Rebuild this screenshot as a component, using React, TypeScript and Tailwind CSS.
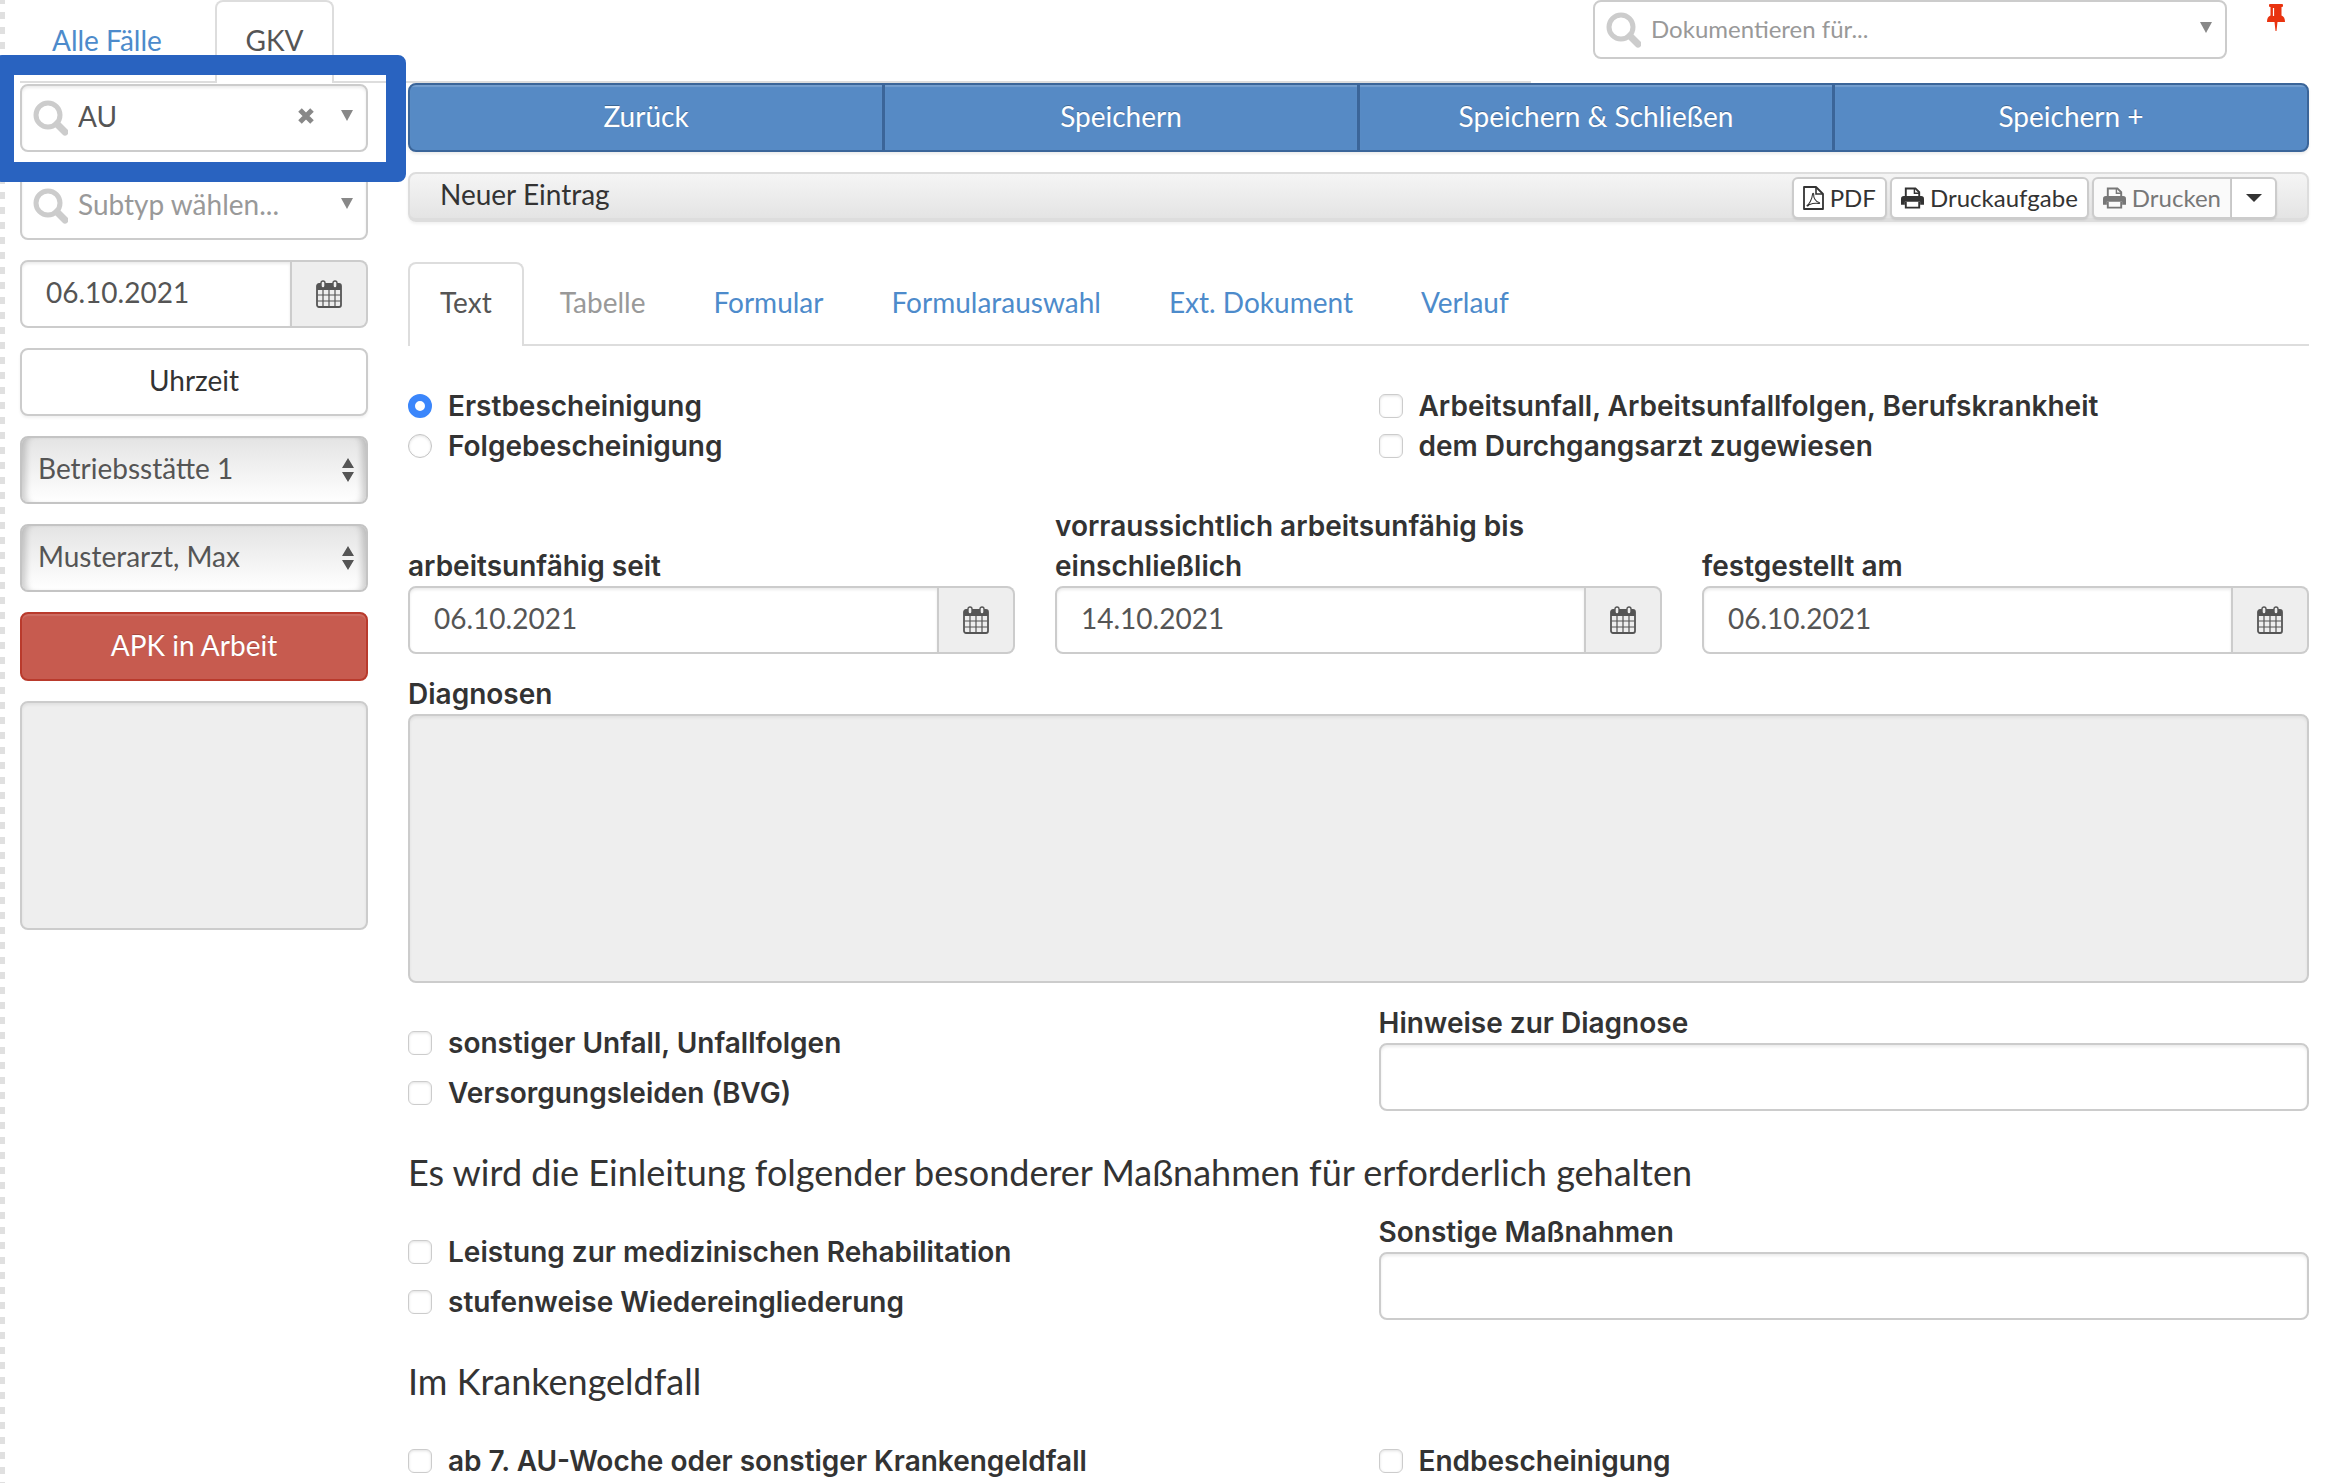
import React, { useState } from 'react';

const field =
  'h-[68px] w-full rounded-lg border-2 border-[#ccc] bg-white pb-1 text-[28px] shadow-[inset_0_2px_3px_rgba(0,0,0,0.08)] outline-none';

const labelText = "font-['Inter',sans-serif] text-[28px] leading-10 font-semibold text-[#333]";

const SearchIcon = () => (
  <svg className="pointer-events-none absolute top-1/2 left-3 h-9 w-9 -translate-y-1/2" viewBox="0 0 36 36" fill="none" stroke="#ccc">
    <circle cx="16" cy="15" r="12" strokeWidth="5" />
    <path d="M25 24l8 8" strokeWidth="7" strokeLinecap="round" />
  </svg>
);

const DownArrow = ({ className = '' }: { className?: string }) => (
  <svg className={className} viewBox="0 0 12 10" preserveAspectRatio="none" fill="currentColor">
    <path d="M0 0h12L6 10z" />
  </svg>
);

const UpDownArrow = () => (
  <svg className="pointer-events-none absolute top-1/2 right-3.5 h-[25px] w-3 -translate-y-1/2 text-[#555]" viewBox="0 0 12 24" fill="currentColor">
    <path d="M0 10h12L6 0zM0 14h12L6 24z" />
  </svg>
);

const CalendarIcon = () => (
  <svg className="h-7 w-[26px] text-[#555]" viewBox="0 0 26 28">
    <rect x="1" y="4" width="24" height="23" rx="2" fill="none" stroke="currentColor" strokeWidth="1.8" />
    <path d="M1 4h24v6H1z" fill="currentColor" />
    <path d="M1.5 15h23M1.5 21h23M7 10v16.5M13 10v16.5M19 10v16.5" stroke="currentColor" strokeWidth="1.2" />
    <rect x="5" y="1" width="4" height="7" rx="2" fill="#eee" stroke="currentColor" strokeWidth="1.4" />
    <rect x="17" y="1" width="4" height="7" rx="2" fill="#eee" stroke="currentColor" strokeWidth="1.4" />
  </svg>
);

const PrintIcon = () => (
  <svg className="h-[22px] w-[23px] shrink-0" viewBox="0 0 24 22">
    <path d="M5 11V1h10l4 4v6" fill="none" stroke="currentColor" strokeWidth="2" />
    <path d="M14 1v5h5" fill="none" stroke="currentColor" strokeWidth="1.5" />
    <path d="M3 9h18a3 3 0 0 1 3 3v6h-4v-3H4v3H0v-6a3 3 0 0 1 3-3z" fill="currentColor" />
    <path d="M5 15v6h14v-6" fill="none" stroke="currentColor" strokeWidth="2" />
  </svg>
);

const PdfIcon = () => (
  <svg className="h-6 w-[21px] shrink-0" viewBox="0 0 21 24" fill="none" stroke="currentColor">
    <path d="M1 1h12l7 7v15H1z" strokeWidth="1.8" strokeLinejoin="round" />
    <path d="M13 1v7h7" strokeWidth="1.6" />
    <path d="M4 19.500c2-1 5-6 5.500-11 0-1.500 1.300-1.500 1.200 0-.4 3 1.800 7 5.300 8 1 .4.600 1.200-.5 1-3-.5-7 .3-9.500 1.200-.8 1.400-1.800 1.800-2 .8z" strokeWidth="1.100" />
  </svg>
);

const PinIcon = () => (
  <svg className="h-[27px] w-[18px]" viewBox="0 0 18 27" fill="#e9330f">
    <path d="M3 0h12q1 0 1 1v1q0 1-1 1h-.5v8.500C17 12.500 18 14.500 18 18h-7.500L9.500 27h-1L7.500 18H0c0-3.500 1-5.500 3.500-6.500V3H3Q2 3 2 2V1q0-1 1-1z" />
    <path d="M6.500 4v8" stroke="#fff" strokeWidth="1.200" />
  </svg>
);

type ComboProps = { label: string; value: string; placeholder?: boolean; clearable?: boolean };

const Combo = ({ label, value, placeholder, clearable }: ComboProps) => (
  <div className="relative">
    <select
      aria-label={label}
      className={`${field} appearance-none pr-20 pl-14 ${placeholder ? 'text-[#999]' : 'text-[#555]'}`}
    >
      <option>{value}</option>
    </select>
    <SearchIcon />
    {clearable && (
      <button aria-label="Auswahl löschen" className="absolute top-1/2 right-[54px] -translate-y-1/2 pb-1 text-[#888]">
        <svg className="h-4 w-4" viewBox="0 0 16 16" stroke="currentColor" strokeWidth="5">
          <path d="M2 2l12 12M14 2L2 14" />
        </svg>
      </button>
    )}
    <DownArrow className="pointer-events-none absolute top-[26px] right-[15px] h-[11px] w-3 text-[#888]" />
  </div>
);

const GradientSelect = ({ label, value }: { label: string; value: string }) => (
  <div className="relative">
    <select
      aria-label={label}
      className="h-[68px] w-full appearance-none rounded-lg border-2 border-[#c4c4c4] bg-linear-to-b from-[#e4e4e4] to-white pb-1 pl-4 text-[28px] text-[#555] shadow-[inset_8px_0_6px_-4px_rgba(0,0,0,0.18),inset_-8px_0_6px_-4px_rgba(0,0,0,0.18)] outline-none"
    >
      <option>{value}</option>
    </select>
    <UpDownArrow />
  </div>
);

const DateInput = ({ id, label, value }: { id: string; label?: string; value: string }) => (
  <div className="flex">
    <input
      id={id}
      type="text"
      aria-label={label}
      defaultValue={value}
      className={`${field} min-w-0 flex-1 rounded-r-none px-6 text-[#555]`}
    />
    <button
      aria-label="Kalender"
      className="flex w-[76px] shrink-0 items-center justify-center rounded-r-lg border-2 border-l-0 border-[#ccc] bg-[#eee]"
    >
      <CalendarIcon />
    </button>
  </div>
);

const Check = ({ label }: { label: string }) => (
  <label className={`flex items-center gap-4 ${labelText}`}>
    <input
      type="checkbox"
      className="h-6 w-6 shrink-0 appearance-none rounded-md border border-[#ccc] bg-white shadow-[inset_0_1px_3px_rgba(0,0,0,0.12)] checked:bg-[#3b82f6]"
    />
    {label}
  </label>
);

const Radio = ({ label, checked }: { label: string; checked?: boolean }) => (
  <label className={`flex items-center gap-4 ${labelText}`}>
    <input
      type="radio"
      name="bescheinigung"
      defaultChecked={checked}
      className="h-6 w-6 shrink-0 appearance-none rounded-full border border-[#c4c4c4] bg-white shadow-[inset_0_1px_3px_rgba(0,0,0,0.12)] checked:border-[7px] checked:border-[#3b86fb] checked:shadow-none"
    />
    {label}
  </label>
);

const TextField = ({ id, label }: { id: string; label: string }) => (
  <div>
    <label htmlFor={id} className={`block ${labelText}`}>{label}</label>
    <input id={id} type="text" className={`${field} px-6 text-[#555]`} />
  </div>
);

const tabs = ['Text', 'Tabelle', 'Formular', 'Formularauswahl', 'Ext. Dokument', 'Verlauf'];
const actions = ['Zurück', 'Speichern', 'Speichern & Schließen', 'Speichern +'];

const smallButton =
  'flex h-[42px] items-center gap-1.5 border-2 border-[#ccc] text-[24px] leading-none shadow-[0_1px_2px_rgba(0,0,0,0.1)]';

export default function App() {
  const [tab, setTab] = useState('Text');

  return (
    <div className="relative flex min-h-screen overflow-hidden bg-white font-['Lato',sans-serif] text-[28px] leading-10 text-[#333]">
      <div className="w-[5px] shrink-0 bg-[repeating-linear-gradient(to_bottom,#e0e0e0_0,#e0e0e0_4px,#fff_4px,#fff_12px,#e0e0e0_12px,#e0e0e0_15px)]" />

      <div className="min-w-0 flex-1 pr-[27px] pl-[15px]">
        <header className="flex h-[83px] items-start">
          <nav className="flex h-full w-[66%] border-b-2 border-[#ddd]">
            <a href="#alle" className="w-[195px] pt-5 pl-8 text-[#4d8bcb]">Alle Fälle</a>
            <a href="#gkv" className="-mb-0.5 w-[119px] rounded-t-lg border-2 border-b-0 border-[#ddd] bg-white pt-[18px] text-center text-[#555]">
              GKV
            </a>
          </nav>
          <div className="ml-auto flex shrink-0 gap-10 pr-6">
            <div className="relative w-[634px]">
              <select
                aria-label="Dokumentieren für"
                className="block h-[59px] w-full appearance-none rounded-lg border-2 border-[#ccc] bg-white pb-0.5 pl-14 text-[24px] text-[#999] outline-none"
              >
                <option>Dokumentieren für...</option>
              </select>
              <SearchIcon />
              <DownArrow className="pointer-events-none absolute top-[22px] right-[15px] h-[11px] w-3 text-[#888]" />
            </div>
            <button aria-label="Anheften" className="mt-1 self-start"><PinIcon /></button>
          </div>
        </header>

        <div className="flex gap-10">
          <aside className="flex w-[348px] shrink-0 flex-col gap-5 pt-px">
            <Combo label="Typ" value="AU" clearable />
            <Combo label="Subtyp" value="Subtyp wählen..." placeholder />
            <DateInput id="datum" label="Datum" value="06.10.2021" />
            <button className="h-[68px] rounded-lg border-2 border-[#ccc] bg-white pb-1 shadow-[0_2px_3px_rgba(0,0,0,0.06)]">Uhrzeit</button>
            <GradientSelect label="Betriebsstätte" value="Betriebsstätte 1" />
            <GradientSelect label="Arzt" value="Musterarzt, Max" />
            <button className="h-[69px] rounded-lg border-2 border-[#b93a2c] bg-[#c75b4f] pb-1 text-white shadow-[inset_0_2px_1px_rgba(255,255,255,0.12)] [text-shadow:0_-1px_0_rgba(0,0,0,0.2)]">
              APK in Arbeit
            </button>
            <textarea aria-label="Notiz" disabled className="h-[229px] resize-none rounded-lg border-2 border-[#ccc] bg-[#eee] shadow-[inset_0_2px_3px_rgba(0,0,0,0.06)]" />
          </aside>

          <main className="min-w-0 flex-1">
            <div className="flex h-[69px] overflow-hidden rounded-lg border-2 border-[#3b6599] bg-[#568ac5] shadow-[0_2px_3px_rgba(0,0,0,0.08)]">
              {actions.map((a) => (
                <button
                  key={a}
                  className="flex-1 border-r-[3px] border-[#3b6599] pb-1 text-white shadow-[inset_0_2px_1px_rgba(255,255,255,0.18)] [text-shadow:0_-1px_0_rgba(0,0,0,0.25)] last:border-r-0"
                >
                  {a}
                </button>
              ))}
            </div>

            <div className="mt-5 flex h-[50px] items-center rounded-lg border-2 border-b-4 border-[#ddd] bg-linear-to-b from-[#f5f5f5] to-[#e4e4e4] px-[30px] shadow-[0_2px_3px_rgba(0,0,0,0.06)]">
              <span className="flex-1 pb-1">Neuer Eintrag</span>
              <div className="flex items-center gap-[3px] pt-1">
                <button className={`${smallButton} rounded-md bg-white px-[9px]`}><PdfIcon />PDF</button>
                <button className={`${smallButton} rounded-md bg-white px-[9px]`}><PrintIcon />Druckaufgabe</button>
                <div className="flex">
                  <button disabled className={`${smallButton} rounded-l-md bg-[#fafafa] px-[9px] text-[#777]`}><PrintIcon />Drucken</button>
                  <button aria-label="Druckoptionen" className={`${smallButton} w-[45px] justify-center rounded-r-md border-l-0 bg-white`}>
                    <DownArrow className="h-2 w-4" />
                  </button>
                </div>
              </div>
            </div>

            <nav className="mt-10 flex h-[84px] gap-1 border-b-2 border-[#ddd]">
              {tabs.map((t) => (
                <a
                  key={t}
                  href={`#${t}`}
                  onClick={() => setTab(t)}
                  className={`-mb-0.5 rounded-t-lg border-2 border-b-0 px-[30px] pt-[18px] ${
                    t === tab
                      ? 'border-[#ddd] bg-white text-[#555]'
                      : t === 'Tabelle'
                        ? 'border-transparent text-[#999]'
                        : 'border-transparent text-[#4d8bcb]'
                  }`}
                >
                  {t}
                </a>
              ))}
            </nav>

            <div className="mt-10 grid grid-cols-2 gap-x-10">
              <div>
                <Radio label="Erstbescheinigung" checked />
                <Radio label="Folgebescheinigung" />
              </div>
              <div>
                <Check label="Arbeitsunfall, Arbeitsunfallfolgen, Berufskrankheit" />
                <Check label="dem Durchgangsarzt zugewiesen" />
              </div>
            </div>

            <div className="mt-10 grid grid-cols-3 items-end gap-x-10">
              <div>
                <label htmlFor="seit" className={`block ${labelText}`}>arbeitsunfähig seit</label>
                <DateInput id="seit" value="06.10.2021" />
              </div>
              <div>
                <label htmlFor="bis" className={`block ${labelText}`}>
                  vorraussichtlich arbeitsunfähig bis<br />einschließlich
                </label>
                <DateInput id="bis" value="14.10.2021" />
              </div>
              <div>
                <label htmlFor="am" className={`block ${labelText}`}>festgestellt am</label>
                <DateInput id="am" value="06.10.2021" />
              </div>
            </div>

            <div className="mt-5">
              <label htmlFor="diagnosen" className={`block ${labelText}`}>Diagnosen</label>
              <textarea id="diagnosen" disabled className="block h-[269px] w-full resize-none rounded-lg border-2 border-[#ccc] bg-[#eee] shadow-[inset_0_2px_3px_rgba(0,0,0,0.06)]" />
            </div>

            <div className="mt-5 grid grid-cols-2 gap-x-10">
              <div className="flex flex-col gap-2.5 pt-5">
                <Check label="sonstiger Unfall, Unfallfolgen" />
                <Check label="Versorgungsleiden (BVG)" />
              </div>
              <TextField id="hinweise" label="Hinweise zur Diagnose" />
            </div>

            <h3 className="mt-[39px] text-[36px] leading-10">
              Es wird die Einleitung folgender besonderer Maßnahmen für erforderlich gehalten
            </h3>
            <div className="mt-5 grid grid-cols-2 gap-x-10">
              <div className="flex flex-col gap-2.5 pt-5">
                <Check label="Leistung zur medizinischen Rehabilitation" />
                <Check label="stufenweise Wiedereingliederung" />
              </div>
              <TextField id="massnahmen" label="Sonstige Maßnahmen" />
            </div>

            <h3 className="mt-[39px] text-[36px] leading-10">Im Krankengeldfall</h3>
            <div className="mt-10 grid grid-cols-2 gap-x-10">
              <Check label="ab 7. AU-Woche oder sonstiger Krankengeldfall" />
              <Check label="Endbescheinigung" />
            </div>
          </main>
        </div>
      </div>

      {/* highlight frame around the type selection */}
      <div className="pointer-events-none absolute top-[55px] -left-1.5 h-[127px] w-[412px] rounded-lg border-20 border-[#2963c0]" />
    </div>
  );
}
